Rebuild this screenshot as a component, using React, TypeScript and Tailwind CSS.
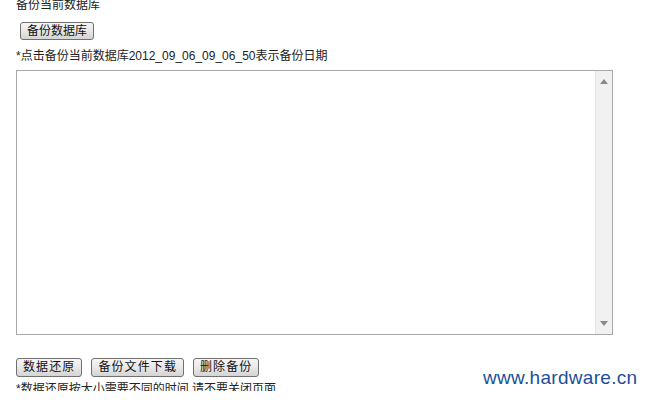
import React from "react";

const font = "font-['Liberation_Sans','Noto_Sans_CJK_SC',sans-serif]";

function OldButton({ label, wide }: { label: string; wide?: boolean }) {
  return (
    <button
      type="button"
      className={`rounded-[3px] border border-[#707070] bg-gradient-to-b from-[#f6f6f6] via-[#e8e8e8] to-[#d4d4d4] px-[6px] text-[12px] text-[#111] ${
        wide ? "h-[19px] leading-[17px] tracking-[1.1px]" : "h-[18px] leading-[16px] tracking-[0px]"
      }`}
    >
      {label}
    </button>
  );
}

function FakeTextarea() {
  return (
    <div className="flex h-[265px] w-[597px] border border-[#a9a9a9] bg-white">
      <div className="flex-1" />
      <div className="flex w-[17px] flex-col items-center justify-between border-l border-[#e4e4e4] bg-[#f1f1f1] py-[8px]">
        <svg width="8" height="5" viewBox="0 0 8 5" aria-hidden="true">
          <path d="M4 0L8 5H0z" fill="#8a8a8a" />
        </svg>
        <svg width="8" height="5" viewBox="0 0 8 5" aria-hidden="true">
          <path d="M0 0h8L4 5z" fill="#8a8a8a" />
        </svg>
      </div>
    </div>
  );
}

export default function App() {
  return (
    <div className={`relative h-[402px] w-[653px] overflow-hidden bg-white ${font}`}>
      <div className="h-[391px] overflow-hidden">
        <div className="-mt-[3px] pl-[16px] text-[#222]">
          <p className="text-[12px] leading-[16px]">备份当前数据库</p>
          <div className="mt-[5px] pl-[4px]">
            <OldButton label="备份数据库" />
          </div>
          <p className="mt-[6px] text-[12px] leading-[16px]">*点击备份当前数据库2012_09_06_09_06_50表示备份日期</p>
          <div className="mt-[6px]">
            <FakeTextarea />
          </div>
          <div className="mt-[23px] flex gap-[9px]">
            <OldButton label="数据还原" wide />
            <OldButton label="备份文件下载" wide />
            <OldButton label="删除备份" wide />
          </div>
          <p className="mt-[4px] text-[12px] leading-[16px]">*数据还原按大小需要不同的时间,请不要关闭页面</p>
        </div>
      </div>
      <div className="absolute left-[483px] top-[367px] text-[19px] leading-[22px] tracking-[0.3px] text-[#1d4f98] font-['Liberation_Sans',sans-serif]">
        www.hardware.cn
      </div>
    </div>
  );
}
